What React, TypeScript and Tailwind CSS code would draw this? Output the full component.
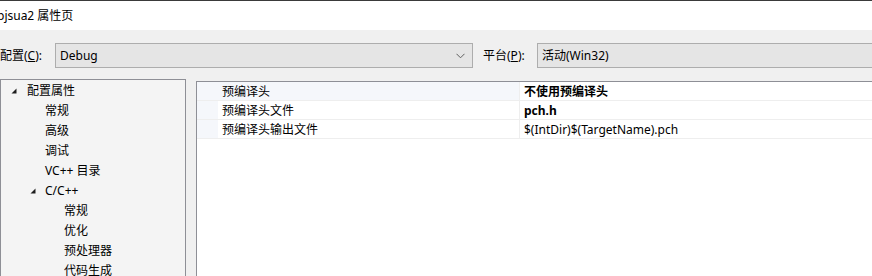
const font = { fontFamily: '"Noto Sans", "Noto Sans CJK SC", sans-serif' }

type TreeItem = { label: string; level: number; open?: boolean }

const tree: TreeItem[] = [
  { label: '配置属性', level: 0, open: true },
  { label: '常规', level: 1 },
  { label: '高级', level: 1 },
  { label: '调试', level: 1 },
  { label: 'VC++ 目录', level: 1 },
  { label: 'C/C++', level: 1, open: true },
  { label: '常规', level: 2 },
  { label: '优化', level: 2 },
  { label: '预处理器', level: 2 },
  { label: '代码生成', level: 2 },
]

const props = [
  { name: '预编译头', value: '不使用预编译头', bold: true, selected: true },
  { name: '预编译头文件', value: 'pch.h', bold: true },
  { name: '预编译头输出文件', value: '$(IntDir)$(TargetName).pch', bold: false },
]

function Triangle() {
  return (
    <svg width="6" height="6" viewBox="0 0 6 6" className="shrink-0">
      <polygon points="5.5,0.5 5.5,5.5 0.5,5.5" fill="#1e1e1e" />
    </svg>
  )
}

function Chevron() {
  return (
    <svg width="9" height="6" viewBox="0 0 9 6">
      <polyline points="0.5,0.8 4.5,4.8 8.5,0.8" fill="none" stroke="#606060" strokeWidth="1" />
    </svg>
  )
}

export default function App() {
  return (
    <div
      className="w-[872px] h-[276px] overflow-hidden bg-[#f0f0f0] text-[12px] text-black flex flex-col"
      style={font}
    >
      {/* 标题栏 */}
      <div className="h-[30px] shrink-0 bg-white border-t border-[#3a3a3a] flex items-center">
        <span className="ml-[-3px] leading-none">pjsua2 属性页</span>
      </div>

      {/* 配置 / 平台 */}
      <div className="flex items-center mt-[13px] h-[25px] shrink-0">
        <span className="w-[55px] shrink-0 leading-none">
          配置(<span className="underline">C</span>):
        </span>
        <div className="w-[418px] h-full shrink-0 bg-[#e5e5e5] border border-[#adadad] flex items-center justify-between pl-[4px] pr-[7px]">
          <span className="leading-none">Debug</span>
          <Chevron />
        </div>
        <span className="ml-[10px] w-[54px] shrink-0 leading-none">
          平台(<span className="underline">P</span>):
        </span>
        <div className="flex-1 h-full bg-[#e5e5e5] border border-[#adadad] border-r-0 flex items-center pl-[4px]">
          <span className="leading-none">活动(Win32)</span>
        </div>
      </div>

      <div className="flex flex-1 mt-[11px] min-h-0">
        {/* 左侧树 */}
        <div className="w-[186px] shrink-0 bg-[#f4f4f4] border border-[#8e8f96] border-b-0 pt-[1px]">
          {tree.map((item, i) => (
            <div
              key={i}
              className="h-[20px] flex items-center"
              style={{ paddingLeft: item.level === 0 ? 10 : item.level === 1 ? 44 : 63 }}
            >
              {item.open && (
                <span className={item.level === 0 ? 'mr-[10px]' : 'ml-[-15px] mr-[9px]'}>
                  <Triangle />
                </span>
              )}
              <span className="leading-none">{item.label}</span>
            </div>
          ))}
        </div>

        {/* 右侧属性表 */}
        <div className="ml-[10px] flex-1 bg-white border-t border-l border-[#8e8f96] mt-[2px]">
          {props.map((p, i) => (
            <div key={i} className="flex h-[19px] border-b border-[#eeeeee]">
              <div className="w-[21px] shrink-0 bg-[#f5f7fb]" />
              <div
                className={`w-[301px] shrink-0 flex items-center pl-[4px] pt-[2px] ${p.selected ? 'bg-[#f5f7fb]' : 'bg-white'}`}
              >
                <span className="leading-none">{p.name}</span>
              </div>
              <div className="flex-1 flex items-center pl-[4px] pt-[2px] border-l border-[#eeeeee]">
                <span className={`leading-none ${p.bold ? 'font-bold' : ''}`}>{p.value}</span>
              </div>
            </div>
          ))}
        </div>
      </div>
    </div>
  )
}
